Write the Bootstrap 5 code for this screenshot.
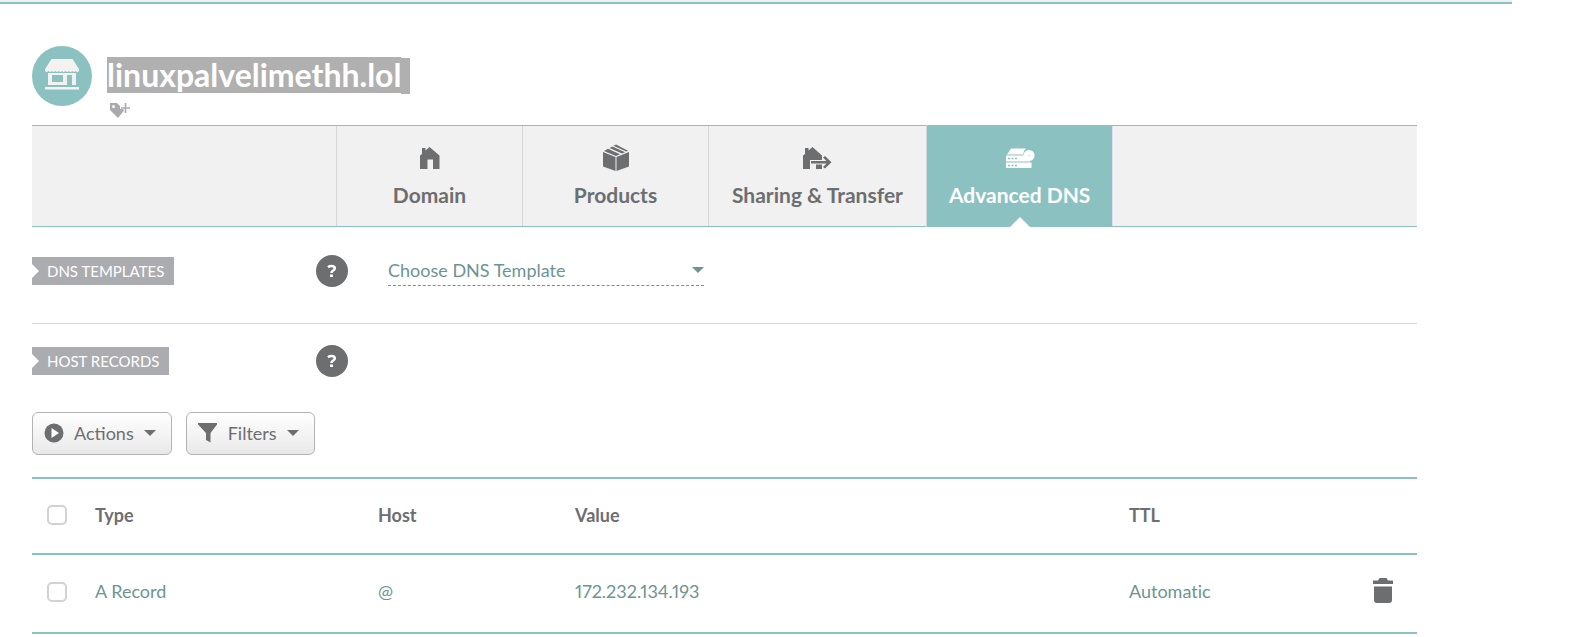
<!DOCTYPE html>
<html lang="en">
<head>
<meta charset="utf-8">
<meta name="viewport" content="width=device-width, initial-scale=1">
<title>linuxpalvelimethh.lol - Advanced DNS</title>
<link href="https://cdn.jsdelivr.net/npm/bootstrap@5.3.0/dist/css/bootstrap.min.css" rel="stylesheet">
<style>
:root { --teal: #8cc1c1; --teal-text: #6d9494; --ink: #6d6e70; --tag: #abacb0; --panel: #f1f1f1; --rule: #d5d6d7; }
body { font-family: Lato, "Open Sans", sans-serif; font-size: 18px; line-height: 24px; color: var(--ink); background: #fff; font-variant-ligatures: none; font-variant-numeric: proportional-nums; }
svg { display: block; }
.top-strip { height: 4px; margin-right: 60px; background: var(--panel); border-bottom: 2px solid var(--teal); }
.page { padding: 42px 155px 0 32px; }
.site-icon { width: 60px; height: 60px; background: var(--teal); }
.domain-head { height: 79px; gap: 15px; }
.domain-info { padding-top: 11px; }
.domain-name { font-size: 32px; line-height: 36px; font-weight: 700; color: #fff; }
.domain-name span { background: #b0b0b0; height: 36px; }
.domain-name span + span { width: 9px; margin-top: 1px; margin-bottom: -1px; }
.tag-btn { margin: 10px 0 0 3px; }
.tabs { background: var(--panel); border-top: 1px solid var(--teal); border-bottom: 1px solid var(--teal); padding-left: 304px; height: 102px; }
.tabs .tab { min-width: 186px; padding: 16px 23px 0; border-left: 1px solid var(--rule); color: var(--ink); font-size: 21px; line-height: 26px; font-weight: 700; text-decoration: none; gap: 10px; white-space: nowrap; }
.tabs .tab.active { background: var(--teal); color: #fff; margin: -1px 0; padding: 17px 22px 0; position: relative; }
.tabs .tab.active::after { content: ""; position: absolute; bottom: 0; left: 50%; margin-left: -10px; border: 10px solid transparent; border-top: 0; border-bottom-color: #fff; }
.setting { padding: 28px 0 36px; }
.setting + .setting { border-top: 1px solid var(--rule); padding-top: 21px; padding-bottom: 35px; }
.label-col { width: 284px; }
.ribbon { background: var(--tag); color: #fff; font-size: 15px; line-height: 28px; font-weight: 400; padding: 0 10px 0 15px; margin: 0; clip-path: polygon(0 0, 100% 0, 100% 100%, 0 100%, 0 21px, 7px 14px, 0 7px); }
.help { width: 32px; height: 32px; background: var(--ink); }
.template-select { width: 316px; height: 30px; margin-left: 40px; padding: 0 0 2px; color: var(--teal-text); border: 0; border-bottom: 1px dashed var(--teal-text); border-radius: 0; appearance: none; background: url("data:image/svg+xml,%3Csvg xmlns='http://www.w3.org/2000/svg' width='12' height='6'%3E%3Cpath d='M0 0h12L6 6z' fill='%236d9494'/%3E%3C/svg%3E") no-repeat right 0 top 11px; }
.toolbar { gap: 14px; }
.tool-btn { height: 43px; padding: 0 15px 2px 11px; gap: 10px; border: 1px solid #b3b3b3; border-radius: 6px; background: linear-gradient(#fff, #e9e9e9); color: var(--ink); }
.records { margin-top: 22px; table-layout: fixed; width: 100%; border-collapse: separate; border-spacing: 0; border-top: 2px solid var(--teal); }
.records th, .records td { height: 76px; border-bottom: 2px solid var(--teal); padding: 0 0 2px; vertical-align: middle; }
.records td { height: 79px; color: var(--teal-text); padding-bottom: 6px; }
.records td.pick { padding-bottom: 3px; }
.records .pick { padding-left: 15px; }
.records input { display: block; appearance: none; width: 20px; height: 20px; border: 2px solid #d2d2d2; border-radius: 5px; background: #fff; margin: 0; }
.c-pick { width: 63px; } .c-type { width: 283px; } .c-host { width: 197px; } .c-ttl { width: 244px; } .c-del { width: 44px; }
</style>
</head>
<body>
<div class="top-strip"></div>
<main class="page">
  <header class="domain-head d-flex align-items-start">
    <div class="site-icon rounded-circle d-flex align-items-center justify-content-center flex-shrink-0">
      <svg width="34" height="34" viewBox="0 0 34 34" fill="#f3f2f1"><path d="M6.500 0h21L34 10v2q-1.700 2-3.400 0-1.700 2-3.400 0-1.700 2-3.400 0-1.700 2-3.400 0-1.700 2-3.400 0-1.700 2-3.400 0-1.700 2-3.400 0-1.700 2-3.400 0-1.700 2-3.400 0-1.700 2-3.400 0v-2z"/><path fill-rule="evenodd" d="M3 14h28v12h-4V16h-5v10H3zM7 16v7h11v-7z"/><path d="M0 28h34v2.500H0z"/></svg>
    </div>
    <div class="domain-info">
      <h1 class="domain-name d-flex m-0"><span>linuxpalvelimethh.lol</span><span></span></h1>
      <button type="button" class="tag-btn btn p-0 border-0 d-block" aria-label="Add tag">
        <svg width="20" height="15" viewBox="0 0 20 15" fill="#a9aaad"><path fill-rule="evenodd" d="M0 0h7l3 3v3h3l1 1.500L8 15 0 7zM3.500 2a1.500 1.500 0 1 0 0 3 1.500 1.500 0 0 0 0-3z"/><path d="M14.700 0h1.600v4.200H20v1.600h-3.700V10h-1.600V5.800H11V4.200h3.700z"/></svg>
      </button>
    </div>
  </header>

  <nav class="tabs d-flex" aria-label="Domain sections">
    <a href="#domain" class="tab d-flex flex-column align-items-center">
      <svg width="30" height="30" viewBox="0 0 30 30" fill="#6d6e70"><path d="M5 13.500 7 12V6h3.500v2.500l4-3.500 10 8.500V27h-6.500V17.500h-5.500V27H5z"/></svg>
      Domain</a>
    <a href="#products" class="tab d-flex flex-column align-items-center">
      <svg width="30" height="30" viewBox="0 0 30 30" fill="#6d6e70"><path d="m2 10 12.500 5v14L2 24.500zM28 10l-12.500 5v14L28 24.500zM3 9l4-2.200 12 5.400-4 1.900zM8.500 6l3-1.600 12.500 5.800-3 1.300zM12.500 3.800 15 2.500l12 6.300-1.800.8z"/></svg>
      Products</a>
    <a href="#sharing" class="tab d-flex flex-column align-items-center">
      <svg width="30" height="30" viewBox="0 0 30 30" fill="#6d6e70"><path d="M1 13.500 3 12V6h3.500v2.500L10.500 5l9.500 8.500V18H8v9H1zM14 22.500h6V27h-6z"/><path d="M9 19h15.500L21 15.500l2-1.500 6.500 6.200L23 26.500 21 25l3.500-3.500H9z"/></svg>
      Sharing &amp; Transfer</a>
    <a href="#dns" class="tab active d-flex flex-column align-items-center" aria-current="page">
      <svg width="30" height="30" viewBox="0 0 30 30" fill="#fff"><path d="M6 6.500h15q-3 2.500-2.500 6H2z"/><path fill-rule="evenodd" d="M1 13.500h18q2 4 6 5v1H1zM3 15.800v1.400h2v-1.400zm3.500 0v1.400h2v-1.400zm3.500 0v1.400h2v-1.400zM1 20.500h25.500V26H1zM3 22.800v1.400h2v-1.400zm3.500 0v1.400h2v-1.400zm3.500 0v1.400h2v-1.400z"/><circle cx="24" cy="13.500" r="5.500"/><path fill="#c5e0e0" d="M23.300 12.800h1.500v1.500h-1.500z"/></svg>
      Advanced DNS</a>
    <div class="border-start"></div>
  </nav>

  <section class="setting d-flex align-items-center">
    <div class="label-col d-flex"><h2 class="ribbon">DNS TEMPLATES</h2></div>
    <button type="button" class="help btn p-0 border-0 rounded-circle d-flex align-items-center justify-content-center" aria-label="Help with DNS templates">
      <svg width="12" height="16" viewBox="0 0 12 16"><path d="M2 4.200Q3.500 3 5.500 3 8.800 3 8.800 5.200 8.800 6.800 7 7.600 5.500 8.300 5.500 10" fill="none" stroke="#fff" stroke-width="2.600"/><path d="M4 11.500h3V14H4z" fill="#fff"/></svg>
    </button>
    <select class="template-select" aria-label="DNS template"><option>Choose DNS Template</option></select>
  </section>

  <section class="setting d-flex align-items-center">
    <div class="label-col d-flex"><h2 class="ribbon">HOST RECORDS</h2></div>
    <button type="button" class="help btn p-0 border-0 rounded-circle d-flex align-items-center justify-content-center" aria-label="Help with host records">
      <svg width="12" height="16" viewBox="0 0 12 16"><path d="M2 4.200Q3.500 3 5.500 3 8.800 3 8.800 5.200 8.800 6.800 7 7.600 5.500 8.300 5.500 10" fill="none" stroke="#fff" stroke-width="2.600"/><path d="M4 11.500h3V14H4z" fill="#fff"/></svg>
    </button>
  </section>

  <div class="d-flex toolbar">
    <button type="button" class="tool-btn d-flex align-items-center">
      <svg width="20" height="20" viewBox="0 0 20 20"><circle cx="10" cy="10" r="9.500" fill="#6d6e70"/><path d="m7.500 5 7.500 5-7.500 5z" fill="#fff"/></svg>
      Actions
      <svg width="12" height="6" viewBox="0 0 12 6"><path d="M0 0h12L6 6z" fill="#6d6e70"/></svg>
    </button>
    <button type="button" class="tool-btn d-flex align-items-center">
      <svg width="20" height="20" viewBox="0 0 20 20"><path d="M0 0h19v1.500L12.500 10v9.500L8 17v-7L0 1.500z" fill="#6d6e70"/></svg>
      Filters
      <svg width="12" height="6" viewBox="0 0 12 6"><path d="M0 0h12L6 6z" fill="#6d6e70"/></svg>
    </button>
  </div>

  <table class="records">
    <colgroup><col class="c-pick"><col class="c-type"><col class="c-host"><col><col class="c-ttl"><col class="c-del"></colgroup>
    <thead>
      <tr><th class="pick"><input type="checkbox" aria-label="Select all records"></th><th>Type</th><th>Host</th><th>Value</th><th>TTL</th><th></th></tr>
    </thead>
    <tbody>
      <tr><td class="pick"><input type="checkbox" aria-label="Select A Record"></td><td>A Record</td><td>@</td><td>172.232.134.193</td><td>Automatic</td>
        <td><button type="button" class="btn p-0 border-0 d-block" aria-label="Delete record">
          <svg width="20" height="25" viewBox="0 0 20 25" fill="#6d6e70"><path d="M0 2.500h5L6.500 0h7L15 2.500h5V6H0zM1 8.500h18V22q0 3-3 3H4q-3 0-3-3z"/></svg>
        </button></td></tr>
    </tbody>
  </table>
</main>
<script src="https://cdn.jsdelivr.net/npm/bootstrap@5.3.0/dist/js/bootstrap.bundle.min.js"></script>
</body>
</html>
